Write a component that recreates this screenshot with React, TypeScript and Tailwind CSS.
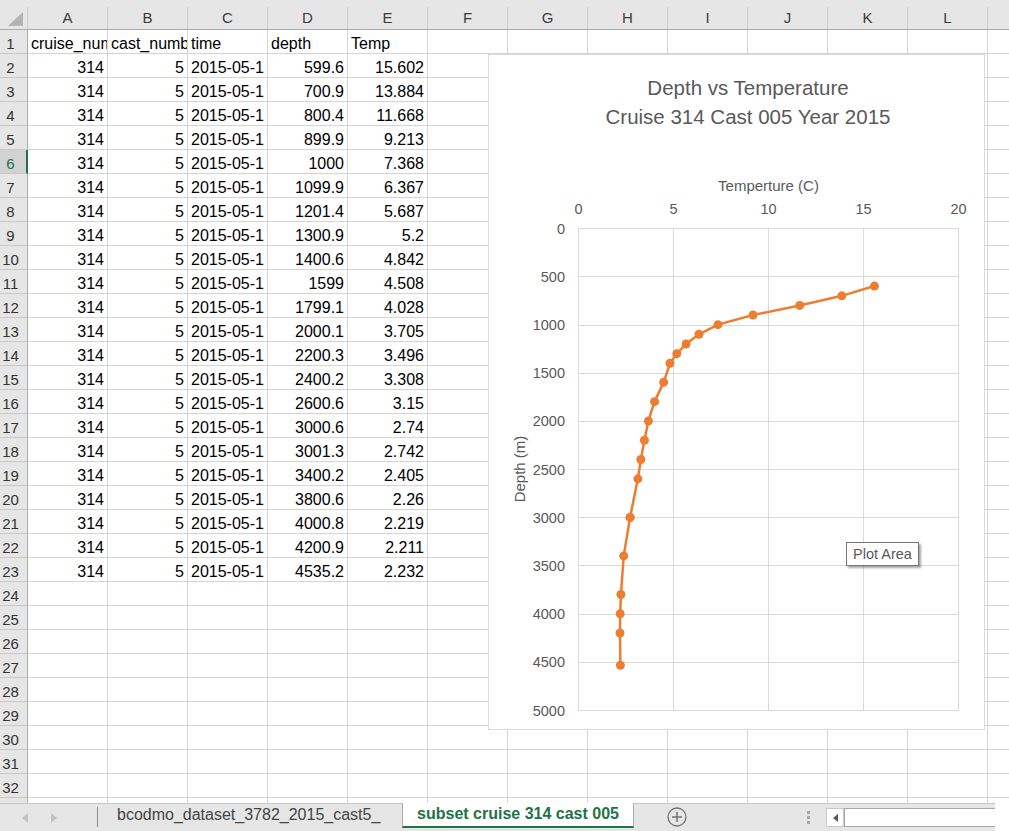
import React from "react";

const COLS = ["A", "B", "C", "D", "E", "F", "G", "H", "I", "J", "K", "L"];

const DATA: [string, string][] = [
  ["599.6", "15.602"],
  ["700.9", "13.884"],
  ["800.4", "11.668"],
  ["899.9", "9.213"],
  ["1000", "7.368"],
  ["1099.9", "6.367"],
  ["1201.4", "5.687"],
  ["1300.9", "5.2"],
  ["1400.6", "4.842"],
  ["1599", "4.508"],
  ["1799.1", "4.028"],
  ["2000.1", "3.705"],
  ["2200.3", "3.496"],
  ["2400.2", "3.308"],
  ["2600.6", "3.15"],
  ["3000.6", "2.74"],
  ["3001.3", "2.742"],
  ["3400.2", "2.405"],
  ["3800.6", "2.26"],
  ["4000.8", "2.219"],
  ["4200.9", "2.211"],
  ["4535.2", "2.232"],
];

type CellDef = { text?: string; right?: boolean };

function Cell({ c }: { c: CellDef }) {
  return (
    <div
      className={
        c.right
          ? "w-[80px] shrink-0 h-[24px] border-r border-b border-[#d4d4d4] flex items-end justify-end pr-[3px] pb-px overflow-hidden whitespace-nowrap text-[16px] leading-4"
          : "w-[80px] shrink-0 h-[24px] border-r border-b border-[#d4d4d4] flex items-end pl-[3px] pb-px overflow-hidden whitespace-nowrap text-[16px] leading-4"
      }
    >
      {c.text ?? ""}
    </div>
  );
}

function RowHeader({ n, selected }: { n: number; selected?: boolean }) {
  return (
    <div
      className={
        selected
          ? "w-[28px] shrink-0 h-[24px] bg-[#d2d2d2] border-b border-[#c8c8c8] border-r-2 border-r-[#217346] flex items-end pb-px"
          : "w-[28px] shrink-0 h-[24px] bg-[#e6e6e6] border-b border-[#c8c8c8] border-r border-r-[#ababab] flex items-end pb-px"
      }
    >
      <span
        className={
          selected
            ? "w-[21px] text-center text-[15px] leading-4 text-[#217346]"
            : "w-[21px] text-center text-[15px] leading-4 text-[#333333]"
        }
      >
        {n}
      </span>
    </div>
  );
}

function HeaderRow() {
  return (
    <div className="flex h-[30px] bg-[#e6e6e6] border-b border-[#ababab]">
      <div className="w-[28px] shrink-0 flex items-end">
        <svg width="27" height="29" viewBox="0 0 27 29" className="block">
          <polygon points="8,26 23,26 23,12" fill="#b4b4b4" />
        </svg>
        <div className="w-px h-[22px] bg-[#cccccc]" />
      </div>
      {COLS.map((c) => (
        <div key={c} className="w-[80px] shrink-0 flex items-end">
          <span className="flex-1 text-center text-[15px] leading-4 pb-[3px] text-[#3c3c3c]">{c}</span>
          <div className="w-px h-[22px] bg-[#cccccc]" />
        </div>
      ))}
      <div className="flex-1" />
    </div>
  );
}

function GridRow({ n, cells }: { n: number; cells: CellDef[] }) {
  return (
    <div className="flex h-[24px]">
      <RowHeader n={n} selected={n === 6} />
      {COLS.map((_, i) => (
        <Cell key={i} c={cells[i] ?? {}} />
      ))}
      <div className="flex-1 h-[24px] border-b border-[#d4d4d4]" />
    </div>
  );
}

const X0 = 89;
const PX = 19;
const Y0 = 173.3;
const PY = 0.09634;
const xs = (t: number) => X0 + t * PX;
const ys = (d: number) => Y0 + d * PY;

function Chart() {
  const pts = DATA.map(([d, t]) => [xs(parseFloat(t)), ys(parseFloat(d))]);
  const depthTicks = Array.from({ length: 11 }, (_, i) => i * 500);
  const tempTicks = [0, 5, 10, 15, 20];
  return (
    <div className="absolute left-[488px] top-[54px] w-[497px] h-[676px] border border-[#d9d9d9] bg-white">
      <div className="pt-[18px] pl-[23px] text-center text-[20.5px] leading-[29px] text-[#595959]">
        <div>Depth vs Temperature</div>
        <div>Cruise 314 Cast 005 Year 2015</div>
      </div>
      <svg width="495" height="674" viewBox="0 0 495 674" className="absolute left-0 top-0">
        {depthTicks.map((d) => {
          const y = Math.round(ys(d)) + 0.5;
          return <line key={"h" + d} x1={X0} x2={xs(20) + 1} y1={y} y2={y} stroke="#d9d9d9" strokeWidth="1" />;
        })}
        {tempTicks.map((t) => {
          const x = Math.round(xs(t)) + 0.5;
          return (
            <line key={"v" + t} x1={x} x2={x} y1={Math.round(ys(0))} y2={Math.round(ys(5000)) + 1} stroke="#d9d9d9" strokeWidth="1" />
          );
        })}
        {tempTicks.map((t) => (
          <text key={"tx" + t} x={xs(t) + 0.5} y={158.5} textAnchor="middle" fontSize="14.5" fill="#595959" fontFamily="Liberation Sans, Arial, sans-serif">
            {t}
          </text>
        ))}
        {depthTicks.map((d) => (
          <text key={"ty" + d} x={76} y={ys(d) + 5.5} textAnchor="end" fontSize="14.5" fill="#595959" fontFamily="Liberation Sans, Arial, sans-serif">
            {d}
          </text>
        ))}
        <text x={279.5} y={135.5} textAnchor="middle" fontSize="15" fill="#595959" fontFamily="Liberation Sans, Arial, sans-serif">
          Temperture (C)
        </text>
        <text transform="translate(35.5,414) rotate(-90)" textAnchor="middle" fontSize="15" fill="#595959" fontFamily="Liberation Sans, Arial, sans-serif">
          Depth (m)
        </text>
        <polyline
          points={pts.map((p) => p.join(",")).join(" ")}
          fill="none"
          stroke="#ed7d31"
          strokeWidth="2.5"
          strokeLinejoin="round"
          strokeLinecap="round"
        />
        {pts.map((p, i) => (
          <circle key={i} cx={p[0]} cy={p[1]} r="4.5" fill="#ed7d31" />
        ))}
      </svg>
      <div className="absolute left-[357px] top-[487px] w-[73px] h-[24px] border border-[#767676] bg-white shadow-[2px_2px_2px_rgba(0,0,0,0.35)] flex items-center justify-center text-[14.5px] leading-4 text-[#595959]">
        Plot Area
      </div>
    </div>
  );
}

function TabBar() {
  return (
    <div className="flex h-[28px]">
      <div className="w-[995px] shrink-0 flex items-start bg-[#e6e6e6] border-t border-[#c6c6c6]">
        <div className="w-[97px] shrink-0 h-full flex items-center pl-[22px]">
          <svg width="6" height="10" viewBox="0 0 6 10" className="block">
            <polygon points="6,0 6,10 0,5" fill="#c4c4c4" />
          </svg>
          <svg width="6" height="10" viewBox="0 0 6 10" className="block ml-[23px]">
            <polygon points="0,0 0,10 6,5" fill="#c4c4c4" />
          </svg>
        </div>
        <div className="w-px h-[20px] mt-[3px] bg-[#8a8a8a] shrink-0" />
        <div className="w-[304px] shrink-0 pl-[19px] pt-[3px] text-[16px] leading-4 text-[#444444] whitespace-nowrap">
          bcodmo_dataset_3782_2015_cast5_
        </div>
        <div className="w-[232px] shrink-0 h-[25px] -mt-px bg-white border-x border-[#ababab] border-b-2 border-b-[#217346] pt-[3px] text-center text-[16px] leading-4 font-bold text-[#217346] whitespace-nowrap">
          subset cruise 314 cast 005
        </div>
        <svg width="20" height="20" viewBox="0 0 20 20" className="block ml-[33px] mt-[3px] shrink-0">
          <circle cx="10" cy="10" r="9" fill="none" stroke="#737373" strokeWidth="1.3" />
          <line x1="5" x2="15" y1="10" y2="10" stroke="#737373" strokeWidth="1.5" />
          <line x1="10" x2="10" y1="5" y2="15" stroke="#737373" strokeWidth="1.5" />
        </svg>
        <div className="ml-[120px] mt-[7px] flex flex-col gap-[2px] shrink-0">
          <div className="w-[3px] h-[3px] bg-[#a6a6a6]" />
          <div className="w-[3px] h-[3px] bg-[#a6a6a6]" />
          <div className="w-[3px] h-[3px] bg-[#a6a6a6]" />
        </div>
        <div className="ml-[16px] mt-[4px] flex-1 h-[19px] flex">
          <div className="w-[18px] h-full shrink-0 border border-[#c8c8c8] bg-white flex items-center justify-center">
            <svg width="5" height="8" viewBox="0 0 5 8" className="block">
              <polygon points="5,0 5,8 0,4" fill="#5a5a5a" />
            </svg>
          </div>
          <div className="flex-1 h-full border border-r-0 border-[#a6a6a6] bg-white" />
        </div>
      </div>
      <div className="flex-1 bg-white" />
    </div>
  );
}

export default function App() {
  const rows: CellDef[][] = [];
  rows.push([{ text: "cruise_number" }, { text: "cast_number" }, { text: "time" }, { text: "depth" }, { text: "Temp" }]);
  DATA.forEach(([d, t]) => {
    rows.push([
      { text: "314", right: true },
      { text: "5", right: true },
      { text: "2015-05-1" },
      { text: d, right: true },
      { text: t, right: true },
    ]);
  });
  while (rows.length < 32) rows.push([]);

  return (
    <div className="relative w-[1009px] h-[831px] overflow-hidden bg-white text-black font-['Liberation_Sans',Arial,sans-serif]">
      <HeaderRow />
      {rows.map((cells, i) => (
        <GridRow key={i} n={i + 1} cells={cells} />
      ))}
      <div className="flex h-[5px] overflow-hidden">
        <div className="w-[28px] shrink-0 h-full bg-[#e6e6e6] border-r border-[#ababab]" />
        {COLS.map((c) => (
          <div key={c} className="w-[80px] shrink-0 h-full border-r border-[#d4d4d4]" />
        ))}
        <div className="flex-1" />
      </div>
      <TabBar />
      <Chart />
    </div>
  );
}
